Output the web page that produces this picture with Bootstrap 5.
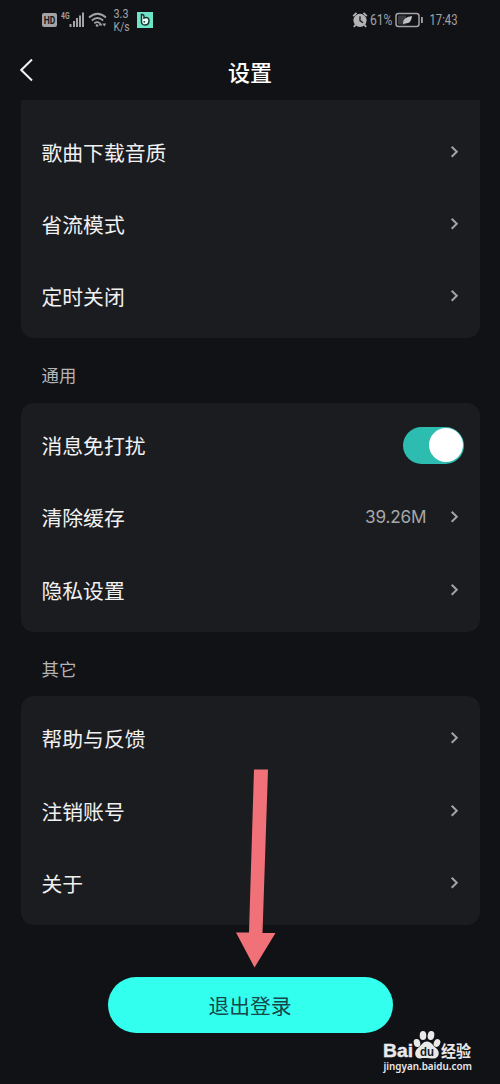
<!DOCTYPE html>
<html lang="zh-CN">
<head>
<meta charset="utf-8">
<meta name="viewport" content="width=device-width, initial-scale=1">
<title>设置</title>
<link href="https://cdn.jsdelivr.net/npm/bootstrap@5.3.0/dist/css/bootstrap.min.css" rel="stylesheet">
<style>
body{background:#111216;color:#f1f1f2;font-family:"Noto Sans CJK SC",sans-serif;width:500px;height:1084px;overflow:hidden}
.status{height:40px}
.status svg,.arrow,.brand-mark{display:block}
.topbar{height:60px;padding:0 20px}
.topbar h1{font-size:22px;font-weight:500;line-height:32px;color:#fff;padding-top:2px}
.side{width:24px}
.panel{margin:0 20.5px;background:#1b1c20;border-radius:13px;padding:7px 17px 5px 21px}
.panel-first{border-radius:0 0 13px 13px;padding-top:16.5px}
.item{height:72.3px;font-size:20.8px;line-height:30px;padding-bottom:2px}
.chev{width:16px;height:16px}
.group-title{height:64.5px;padding-left:41.5px;padding-top:11px;font-size:17.4px;line-height:51px;color:#b5b5b8}
.amount{font-family:Inter,sans-serif;font-size:17.2px;color:#a6a7aa;margin-right:20px;letter-spacing:-.15px}
.switch{width:60.5px;height:37px;border-radius:19px;background:#2cbcb0;padding-right:1px;margin-right:-1px}
.knob{width:34px;height:34px;border-radius:50%;background:#fff}
.logout{width:285px;height:56px;margin-top:51.5px;border:0;border-radius:28px;background:#33ffee;color:#16474a;font-size:20.8px;line-height:30px;padding:1px 0 0}
.logout:hover{background:#33ffee;color:#16474a}
.arrow{left:230px;top:765px}
.brand-mark{left:380px;top:1026px}
</style>
</head>
<body class="position-relative">
<header>
  <div class="status">
    <svg width="500" height="40" font-family="Roboto,sans-serif" fill="#a3a3a6">
      <rect x="42" y="13" width="15" height="14" rx="2"/>
      <text x="43.800" y="23.600" font-size="10" font-weight="700" fill="#18191d" textLength="11.500" lengthAdjust="spacingAndGlyphs">HD</text>
      <text x="61" y="18.500" font-size="8.500" font-weight="700" textLength="8.500" lengthAdjust="spacingAndGlyphs">4G</text>
      <path d="M69.500 24h2v3h-2zM73 21h2v6h-2zM76 18h2v9h-2zM79 15.500h2v11.500h-2zM82 12.500h2v14.500h-2z"/>
      <g fill="none" stroke="#a3a3a6" stroke-width="1.700"><path d="M89 17.500q8.500-7.500 17 0M91.800 20.500q5.700-5 11.400 0M94.300 23.300q2.800-2.400 5.600 0"/></g>
      <circle cx="97" cy="25.500" r="1.300"/>
      <path d="M100.500 22.500l2 3h-4zM104.300 26.500l-2-3h4z"/>
      <text x="113.500" y="18" font-size="12" textLength="15" lengthAdjust="spacingAndGlyphs">3.3</text>
      <text x="113.500" y="30.700" font-size="12" textLength="16" lengthAdjust="spacingAndGlyphs">K/s</text>
      <rect x="137" y="12" width="16" height="16" fill="#6fe3c8"/>
      <path d="M141.500 14.500q3-.5 2.500 3.500 5-1.500 5 2.500 0 4.500-4 4.500t-3.500-4.500z" fill="#e9fff8" stroke="#12362f" stroke-width="1.500"/>
      <circle cx="144.300" cy="21.800" r=".9" fill="#12362f"/>
      <circle cx="360" cy="20.300" r="6.600" fill="#b4b4b6"/>
      <path d="M353.200 16.200l3.300-3.300M366.800 16.200l-3.300-3.300M355.700 24.500l-1.800 2.500M364.300 24.500l1.800 2.500" stroke="#b4b4b6" stroke-width="1.800"/>
      <path d="M360 16.300v4.300l3 2.200" fill="none" stroke="#17181c" stroke-width="1.300"/>
      <text x="370" y="24.900" font-size="14" textLength="22.500" lengthAdjust="spacingAndGlyphs">61%</text>
      <rect x="396" y="13.500" width="23" height="13" rx="2.500" fill="none" stroke="#a3a3a6" stroke-width="1.500"/>
      <rect x="398" y="15.500" width="8" height="9" fill="#38393c"/>
      <rect x="421" y="17" width="1.800" height="6"/>
      <path d="M403 24.500q-1-7.500 9-8.500-.5 8-7.500 7.500z" fill="#c2c2c4"/>
      <text x="429.500" y="24.900" font-size="14" textLength="28" lengthAdjust="spacingAndGlyphs">17:43</text>
    </svg>
  </div>
  <nav class="topbar d-flex align-items-center justify-content-between">
    <svg class="side" height="28" viewBox="0 0 24 28" fill="none" stroke="#f1f1f2" stroke-width="2"><path d="M12 3.500L1.300 14 12 24.500"/></svg>
    <h1 class="m-0">设置</h1><span class="side"></span>
  </nav>
</header>
<svg class="d-none"><symbol id="next" viewBox="0 0 16 16"><path d="M4.700 2.800L9.800 7.800l-5.100 5" fill="none" stroke="#a2a3a6" stroke-width="2"/></symbol></svg>
<main>
  <section class="panel panel-first">
    <div class="item d-flex align-items-center justify-content-between">歌曲下载音质<svg class="chev"><use href="#next"/></svg></div>
    <div class="item d-flex align-items-center justify-content-between">省流模式<svg class="chev"><use href="#next"/></svg></div>
    <div class="item d-flex align-items-center justify-content-between">定时关闭<svg class="chev"><use href="#next"/></svg></div>
  </section>
  <div class="group-title">通用</div>
  <section class="panel">
    <div class="item d-flex align-items-center justify-content-between">消息免打扰<span class="switch d-flex align-items-center justify-content-end"><span class="knob"></span></span></div>
    <div class="item d-flex align-items-center">清除缓存<span class="amount ms-auto">39.26M</span><svg class="chev"><use href="#next"/></svg></div>
    <div class="item d-flex align-items-center justify-content-between">隐私设置<svg class="chev"><use href="#next"/></svg></div>
  </section>
  <div class="group-title">其它</div>
  <section class="panel">
    <div class="item d-flex align-items-center justify-content-between">帮助与反馈<svg class="chev"><use href="#next"/></svg></div>
    <div class="item d-flex align-items-center justify-content-between">注销账号<svg class="chev"><use href="#next"/></svg></div>
    <div class="item d-flex align-items-center justify-content-between">关于<svg class="chev"><use href="#next"/></svg></div>
  </section>
  <button class="btn logout d-block mx-auto">退出登录</button>
</main>
<svg class="arrow position-absolute" width="50" height="206"><path d="M24 4.500h14L32.500 168H45.500L24.500 202.500 6 167.500h13z" fill="#f07178"/></svg>
<svg class="brand-mark position-absolute" width="100" height="50" fill="#e9e9ea">
  <text x="3" y="31" font-family="Liberation Sans,sans-serif" font-weight="700" font-size="18.500" textLength="30" lengthAdjust="spacingAndGlyphs" stroke="#e9e9ea" stroke-width=".4">Bai</text>
  <ellipse cx="37" cy="17" rx="3.200" ry="4.100" transform="rotate(-15 37 17)"/><ellipse cx="43" cy="9.500" rx="3.300" ry="4.500"/><ellipse cx="51" cy="9.500" rx="3.300" ry="4.500" transform="rotate(10 51 9.500)"/><ellipse cx="57" cy="17" rx="3.200" ry="4.100" transform="rotate(20 57 17)"/>
  <path d="M47 15.500c4.500 0 5.500 4 9 6.500 4.500 3.500 3.500 10.500-2.500 10.500-3 0-10-1-13 0-6 .5-7-7-2.500-10.500s4.500-6.500 9-6.500z"/>
  <text x="40" y="29.500" font-family="Liberation Sans,sans-serif" font-weight="700" font-size="12.500" fill="#18191d" textLength="14" lengthAdjust="spacingAndGlyphs">du</text>
  <text x="61" y="30.500" font-family="Noto Sans CJK SC,sans-serif" font-weight="700" font-size="15.500" textLength="30" lengthAdjust="spacingAndGlyphs">经验</text>
  <text x="3.500" y="44" font-family="Noto Sans,sans-serif" font-weight="600" font-size="10.200" textLength="88.500" lengthAdjust="spacingAndGlyphs">jingyan.baidu.com</text>
</svg>
<script src="https://cdn.jsdelivr.net/npm/bootstrap@5.3.0/dist/js/bootstrap.bundle.min.js"></script>
</body>
</html>
